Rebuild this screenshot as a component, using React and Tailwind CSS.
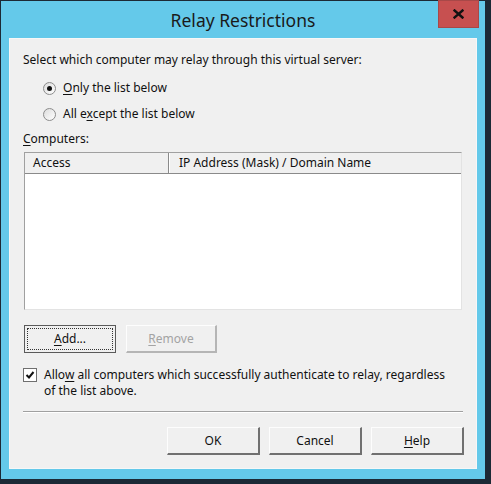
import React from "react";

function U({ children }) {
  return <span className="underline underline-offset-[2px] decoration-[1px]">{children}</span>;
}

function Radio({ checked }) {
  return (
    <span className="relative inline-flex w-[13px] h-[13px] rounded-full border border-[#8c8c8c] bg-gradient-to-br from-[#dcdcdc] to-white items-center justify-center shrink-0">
      {checked && <span className="w-[5px] h-[5px] rounded-full bg-[#111]" />}
    </span>
  );
}

function Btn({ children, w = "w-[93px]", disabled, def }) {
  if (def) {
    return (
      <div className={`${w} h-[28px] border border-[#5a5a5a] bg-[#f0f0f0] p-[2px]`}>
        <div className="h-full border border-dotted border-[#333] flex items-center justify-center text-[#111]">
          {children}
        </div>
      </div>
    );
  }
  return (
    <div
      className={`${w} h-[28px] border-t border-l border-t-[#fdfdfd] border-l-[#fdfdfd] border-r-2 border-b-2 ${
        disabled ? "border-r-[#b5b5b5] border-b-[#b5b5b5] text-[#a3a3a3]" : "border-r-[#707070] border-b-[#707070] text-[#111]"
      } bg-[#f0f0f0] flex items-center justify-center`}
    >
      {children}
    </div>
  );
}

export default function App() {
  return (
    <div
      className="w-[491px] h-[484px] bg-[#1c2935] pt-px pl-px pr-[6px] pb-[5px]"
      style={{ fontFamily: '"Noto Sans", "Open Sans", sans-serif' }}
    >
      <div className="h-full bg-[#64c9ea] flex flex-col">
        <div className="relative h-[37px] flex items-center justify-center">
          <span className="text-[17.5px] text-[#1a1a1a] pt-[1px]">Relay Restrictions</span>
          <div className="absolute top-[-1px] right-[6px] w-[41px] h-[28px] bg-[#c75050] border border-[#a84848] flex items-center justify-center">
            <svg width="11" height="10" viewBox="0 0 11 10">
              <path d="M1.5 1.5 L9.5 8.5 M9.5 1.5 L1.5 8.5" stroke="#111" strokeWidth="2.4" strokeLinecap="square" />
            </svg>
          </div>
        </div>
        <div className="mx-[8px] mb-[10px] flex-1 bg-[#f0f0f0] border border-[#f7f7f7] px-[13px] text-[12px] leading-[16px] text-[#111] flex flex-col">
          <div className="mt-[13px]">Select which computer may relay through this virtual server:</div>
          <div className="mt-[12px] ml-[20px] flex items-center gap-[7px]">
            <Radio checked />
            <span><U>O</U>nly the list below</span>
          </div>
          <div className="mt-[10px] ml-[20px] flex items-center gap-[7px]">
            <Radio />
            <span>All e<U>x</U>cept the list below</span>
          </div>
          <div className="mt-[9px]"><U>C</U>omputers:</div>
          <div className="mt-[5px] ml-[1px] w-[438px] h-[158px] border border-t-[#a0a0a0] border-l-[#a0a0a0] border-r-[#e3e3e3] border-b-[#e3e3e3] bg-white flex flex-col">
            <div className="h-[21px] flex bg-[#f0f0f0] border-b border-[#8a8a8a]">
              <div className="w-[144px] border-r border-[#8a8a8a] pl-[8px] flex items-center">Access</div>
              <div className="flex-1 pl-[9px] flex items-center border-l border-white">IP Address (Mask) / Domain Name</div>
            </div>
            <div className="flex-1" />
          </div>
          <div className="mt-[15px] ml-[1px] flex gap-[10px]">
            <Btn w="w-[92px]" def><U>A</U>dd...</Btn>
            <Btn w="w-[91px]" disabled><U>R</U>emove</Btn>
          </div>
          <div className="mt-[14px] flex items-start gap-[7px]">
            <span className="mt-[1px] w-[14px] h-[14px] border border-[#6f6f6f] bg-white flex items-center justify-center shrink-0">
              <svg width="10" height="10" viewBox="0 0 10 10">
                <path d="M1.5 5 L4 7.5 L8.5 2" stroke="#111" strokeWidth="2" fill="none" />
              </svg>
            </span>
            <span>
              Allo<U>w</U> all computers which successfully authenticate to relay, regardless
              <br />
              of the list above.
            </span>
          </div>
          <div className="mt-[12px] h-[2px] w-[440px] border-t border-[#a0a0a0] border-b border-b-white" />
          <div className="mt-[14px] flex justify-end gap-[9px] mr-[-1px]">
            <Btn>OK</Btn>
            <Btn>Cancel</Btn>
            <Btn><U>H</U>elp</Btn>
          </div>
        </div>
      </div>
    </div>
  );
}
